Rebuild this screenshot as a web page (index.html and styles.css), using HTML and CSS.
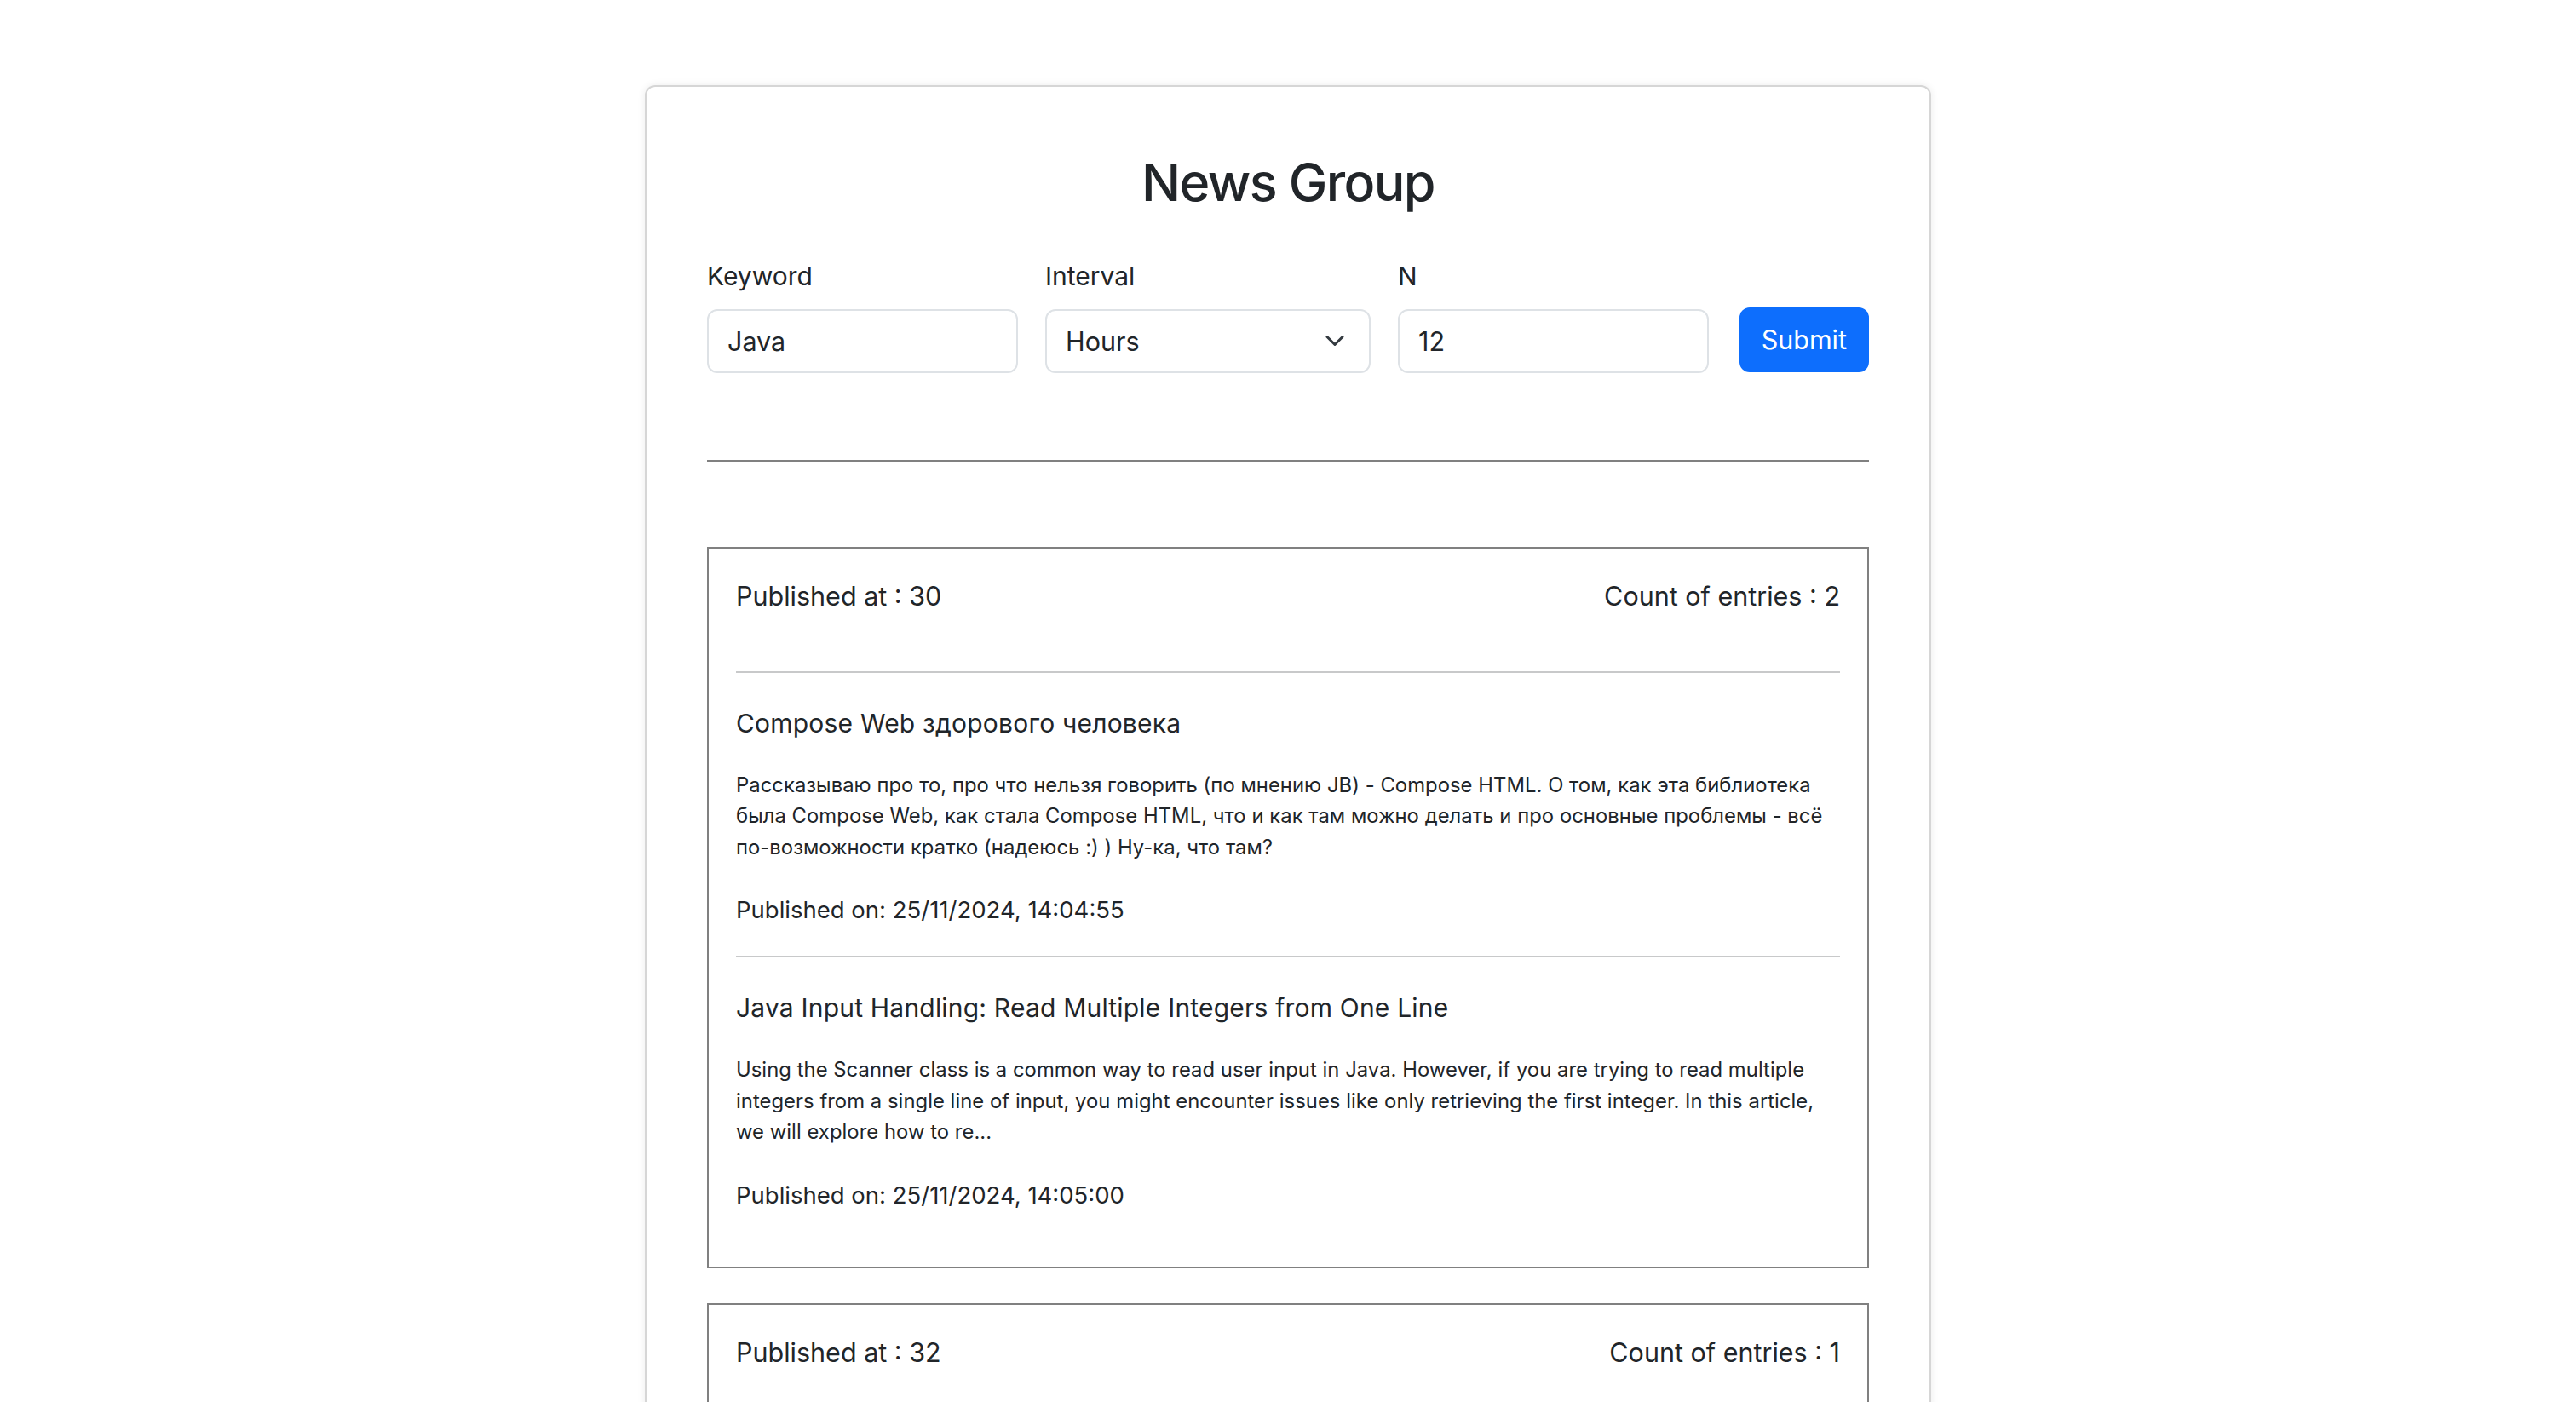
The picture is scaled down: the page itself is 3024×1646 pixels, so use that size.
FILE: index.html
```html
<!DOCTYPE html>
<html lang="en">
<head>
<meta charset="utf-8">
<title>News Group</title>
<link rel="stylesheet" href="styles.css">
</head>
<body>
<main class="card">
  <h2 class="page-title">News Group</h2>
  <form class="search-form">
    <div class="field field-keyword">
      <label class="field-label" for="keyword">Keyword</label>
      <input class="field-input" id="keyword" type="text" value="Java">
    </div>
    <div class="field field-interval">
      <label class="field-label" for="interval">Interval</label>
      <div class="select-wrap">
        <select class="field-input field-select" id="interval">
          <option>Hours</option>
          <option>Days</option>
        </select>
        <svg class="select-chevron" width="22" height="13" viewBox="0 0 22 13" aria-hidden="true"><path d="M2 2l9 9 9-9"/></svg>
      </div>
    </div>
    <div class="field field-n">
      <label class="field-label" for="n">N</label>
      <input class="field-input" id="n" type="text" value="12">
    </div>
    <button class="submit-btn" type="button">Submit</button>
  </form>

  <hr class="divider">

  <section class="group">
    <div class="group-header">
      <span>Published at : 30</span>
      <span>Count of entries : 2</span>
    </div>
    <hr class="entry-sep">
    <article class="entry">
      <h3 class="entry-title">Compose Web здорового человека</h3>
      <p class="entry-desc">Рассказываю про то, про что нельзя говорить (по мнению JB) - Compose HTML. О том, как эта библиотека была Compose Web, как стала Compose HTML, что и как там можно делать и про основные проблемы - всё по-возможности кратко (надеюсь :) ) Ну-ка, что там?</p>
      <p class="entry-date">Published on: 25/11/2024, 14:04:55</p>
    </article>
    <hr class="entry-sep">
    <article class="entry">
      <h3 class="entry-title">Java Input Handling: Read Multiple Integers from One Line</h3>
      <p class="entry-desc">Using the Scanner class is a common way to read user input in Java. However, if you are trying to read multiple integers from a single line of input, you might encounter issues like only retrieving the first integer. In this article, we will explore how to re...</p>
      <p class="entry-date">Published on: 25/11/2024, 14:05:00</p>
    </article>
  </section>

  <section class="group">
    <div class="group-header">
      <span>Published at : 32</span>
      <span>Count of entries : 1</span>
    </div>
    <hr class="entry-sep">
  </section>
</main>
</body>
</html>
```

FILE: styles.css
```css
* { box-sizing: border-box; }

body {
  margin: 0;
  background: #fff;
  color: #212529;
  font-family: Inter, "Noto Sans", sans-serif;
}

.card {
  width: 1510px;
  margin: 100px auto 0;
  padding: 74px 71px 72px;
  border: 2px solid #d6d6d6;
  border-radius: 12px;
  box-shadow: 0 0 10px rgba(0, 0, 0, 0.08);
  background: #fff;
}

.page-title {
  margin: 0 0 47px;
  font-size: 61px;
  font-weight: 500;
  letter-spacing: -1.6px;
  line-height: 76.8px;
  text-align: center;
}

.search-form {
  display: flex;
  align-items: flex-end;
  gap: 32px;
}

.field { display: flex; flex-direction: column; }
.field-keyword { width: 365px; }
.field-interval { width: 382px; }
.field-n { width: 365px; }

.field-label {
  font-size: 30px;
  line-height: 48px;
  margin-bottom: 15px;
}

.field-input {
  width: 100%;
  height: 75px;
  padding: 0 22px;
  border: 2px solid #dee2e6;
  border-radius: 12px;
  font-family: inherit;
  font-size: 30.5px;
  color: #212529;
  background: #fff;
  outline: none;
}

.select-wrap { position: relative; }
.field-select { appearance: none; -webkit-appearance: none; }
.select-chevron {
  position: absolute;
  right: 31px;
  top: 50%;
  transform: translateY(-50%);
  fill: none;
  stroke: #343a40;
  stroke-width: 3;
  stroke-linecap: round;
  stroke-linejoin: round;
  pointer-events: none;
}

.submit-btn {
  height: 76px;
  margin-bottom: 1px;
  margin-left: auto;
  padding: 0 26px;
  border: 0;
  border-radius: 12px;
  background: #0d6efd;
  color: #fff;
  font-family: inherit;
  font-size: 30.5px;
}

.divider {
  margin: 102px 0 100px;
  border: 0;
  border-top: 2px solid #808080;
}

.group {
  border: 2px solid #808080;
  padding: 32px 32px 30px;
  margin-bottom: 41px;
}

.group-header {
  display: flex;
  justify-content: space-between;
  font-size: 30.5px;
  line-height: 48px;
  margin-bottom: 64px;
}

.entry-sep {
  margin: 0;
  border: 0;
  border-top: 2px solid #c8c9ca;
}

.entry { padding: 39px 0 34px; }

.entry-title {
  margin: 0 0 35px;
  font-size: 30px;
  font-weight: 400;
  letter-spacing: 0.2px;
  line-height: 40px;
}

.entry-desc {
  margin: 0 0 35px;
  font-size: 23.8px;
  letter-spacing: 0.05px;
  line-height: 36.5px;
}

.entry-date {
  margin: 0;
  font-size: 27.5px;
  line-height: 40px;
}
```
